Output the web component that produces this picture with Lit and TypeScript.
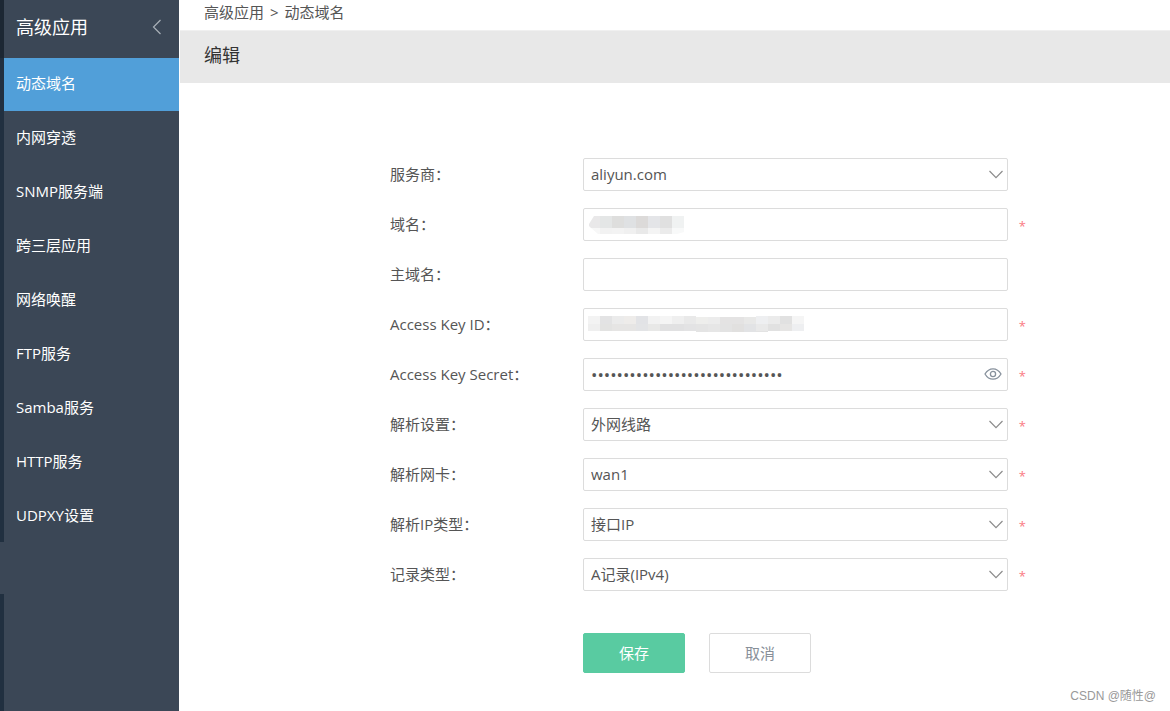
import { LitElement, html, svg, css, nothing } from "lit";
import { customElement, property, state } from "lit/decorators.js";

type Cell = [x: number, y: number, w: number, h: number, fill: string];

interface Field {
  id: string;
  label: string;
  kind: "select" | "text" | "password";
  value?: string;
  options?: string[];
  required?: boolean;
  mask?: "domain" | "key";
}

const MENU = [
  "动态域名",
  "内网穿透",
  "SNMP服务端",
  "跨三层应用",
  "网络唤醒",
  "FTP服务",
  "Samba服务",
  "HTTP服务",
  "UDPXY设置",
];

const FIELDS: Field[] = [
  { id: "provider", label: "服务商", kind: "select", options: ["aliyun.com"] },
  { id: "domain", label: "域名", kind: "text", required: true, mask: "domain" },
  { id: "main-domain", label: "主域名", kind: "text" },
  { id: "key-id", label: "Access Key ID", kind: "text", required: true, mask: "key" },
  {
    id: "key-secret",
    label: "Access Key Secret",
    kind: "password",
    value: "0".repeat(30),
    required: true,
  },
  { id: "line", label: "解析设置", kind: "select", options: ["外网线路"], required: true },
  { id: "nic", label: "解析网卡", kind: "select", options: ["wan1"], required: true },
  { id: "ip-type", label: "解析IP类型", kind: "select", options: ["接口IP"], required: true },
  { id: "record", label: "记录类型", kind: "select", options: ["A记录(IPv4)"], required: true },
];

const row = (fills: string[], x: number, y: number, h: number): Cell[] =>
  fills.map((fill, i) => [x + i * 12, y, 12, h, fill]);

const DOMAIN_CELLS: Cell[] = [
  ...row(["#e4e6e6", "#dededd", "#dfe1e3", "#dcdad9", "#e4e5e8", "#e0e0e0", "#f0f2f2"], 12, 0, 12),
  ...row(["#f2f2f2", "#f3f3f3", "#f0f0f0", "#e9e9e9", "#f4f4f4", "#ebebeb"], 12, 12, 6),
];

const KEY_CELLS: Cell[] = [
  ...row(
    ["#f3f3f3", "#e3e3e4", "#ebebeb", "#eeecea", "#e2e3e6", "#f2f2f2", "#f5f5f5", "#efefef", "#e9e9e9"],
    0, 0, 8,
  ),
  ...row(["#eeeeec", "#ececec", "#e4e3e3", "#e4e3e3", "#e8e8e7", "#efefef"], 108, 1, 7),
  ...row(["#eeeff1", "#ebebeb", "#e1e1e1", "#f5f5f5"], 168, 0, 8),
  ...row(
    ["#efefef", "#e3e3e2", "#e6e5e4", "#e6e5e4", "#e3e4e6", "#e8e8e7", "#e1e1e2", "#e1e1e2", "#e3e3e4"],
    0, 8, 7,
  ),
  ...row(["#e4e4e4", "#e6e6e6", "#e3e3e3", "#e1e0df", "#e2e3e5", "#e3e3e3"], 108, 8, 8),
  ...row(["#e9e9e9", "#e1e1e1", "#e6e5e4", "#eeeff1"], 168, 8, 7),
];

const cells = (list: Cell[]) =>
  list.map(([x, y, w, h, fill]) => svg`<rect x=${x} y=${y} width=${w} height=${h} fill=${fill} />`);

@customElement("side-menu")
class SideMenu extends LitElement {
  @property({ type: Array }) items: string[] = [];
  @state() private active = 0;

  static styles = css`
    :host {
      display: flex;
      flex: none;
      background: #3b4756;
      color: #fff;
    }
    .rail {
      display: flex;
      flex-direction: column;
      width: 4px;
    }
    .rail-top {
      height: 58px;
      background: #1c2733;
    }
    .rail-mid {
      height: 484px;
      background: #213040;
    }
    .rail-current {
      height: 52px;
    }
    .rail-rest {
      flex: 1;
      background: #213040;
    }
    .panel {
      width: 175px;
    }
    .head {
      display: flex;
      align-items: center;
      justify-content: space-between;
      box-sizing: border-box;
      height: 58px;
      padding: 0 17px 4px 12px;
    }
    .title {
      margin: 0;
      font-size: 18px;
      font-weight: 400;
      line-height: 24px;
    }
    .fold {
      display: flex;
      padding: 0;
      border: 0;
      background: none;
      cursor: pointer;
    }
    .list {
      display: grid;
      gap: 1px;
      margin: 0;
      padding: 0;
      list-style: none;
    }
    .item {
      display: block;
      height: 53px;
      padding-left: 12px;
      color: #fff;
      font-size: 15px;
      line-height: 51px;
      text-decoration: none;
    }
    .item.active {
      background: #519fd9;
    }
  `;

  render() {
    return html`
      <div class="rail">
        <div class="rail-top"></div>
        <div class="rail-mid"></div>
        <div class="rail-current"></div>
        <div class="rail-rest"></div>
      </div>
      <nav class="panel">
        <div class="head">
          <h2 class="title">高级应用</h2>
          <button class="fold" type="button" aria-label="收起">
            <svg width="10" height="16" viewBox="0 0 10 16" fill="none" stroke="#a9b0b8" stroke-width="1.2">
              <path d="M8.5 1 L1.5 8 L8.5 15" />
            </svg>
          </button>
        </div>
        <ul class="list">
          ${this.items.map(
            (name, i) => html`<li>
              <a
                class="item ${i === this.active ? "active" : ""}"
                href="#"
                @click=${(e: Event) => {
                  e.preventDefault();
                  this.active = i;
                }}
                >${name}</a
              >
            </li>`,
          )}
        </ul>
      </nav>
    `;
  }
}

@customElement("ddns-form")
class DdnsForm extends LitElement {
  @property({ type: Array }) fields: Field[] = [];
  @state() private reveal = false;

  static styles = css`
    :host {
      display: block;
    }
    .form {
      display: grid;
      gap: 17px;
      padding: 75px 144px 0 211px;
    }
    .row {
      display: grid;
      grid-template-columns: 193px minmax(0, 1fr) 18px;
      align-items: center;
    }
    .label {
      color: #555;
      font-size: 15px;
      line-height: 33px;
    }
    .box {
      display: grid;
      grid-template-columns: minmax(0, 1fr) auto;
      align-items: center;
    }
    .control {
      grid-area: 1 / 1 / 2 / 3;
      box-sizing: border-box;
      width: 100%;
      height: 33px;
      margin: 0;
      padding: 0 32px 2px 7px;
      border: 1px solid #dcdcdc;
      border-radius: 2px;
      outline: 0;
      background: #fff;
      color: #555;
      font-family: inherit;
      font-size: 15px;
      appearance: none;
    }
    .control.secret {
      padding-bottom: 0;
      font-size: 17px;
    }
    .control:focus-visible {
      border-color: #519fd9;
    }
    .icon {
      grid-area: 1 / 2;
      display: flex;
      margin-right: 5px;
      pointer-events: none;
    }
    .eye {
      grid-area: 1 / 2;
      display: flex;
      margin-right: 6px;
      padding: 0 0 2px;
      border: 0;
      background: none;
      cursor: pointer;
    }
    .mask {
      grid-area: 1 / 1;
      justify-self: start;
      margin-left: 5px;
      pointer-events: none;
    }
    .star {
      justify-self: end;
      padding-top: 2px;
      color: #fa7a82;
      font-size: 13px;
      line-height: 18px;
    }
    .actions {
      display: flex;
      gap: 24px;
      padding: 25px 0 0 193px;
    }
    .button {
      box-sizing: border-box;
      width: 102px;
      height: 40px;
      padding: 0 0 2px;
      border: 1px solid #dcdcdc;
      border-radius: 2px;
      background: #fff;
      color: #888f99;
      font-family: inherit;
      font-size: 15px;
      cursor: pointer;
    }
    .button.primary {
      border-color: #59cba1;
      background: #59cba1;
      color: #fff;
    }
  `;

  private mask(kind: Field["mask"]) {
    if (kind === "domain") {
      return html`<svg class="mask" width="96" height="18" viewBox="0 0 96 18" aria-hidden="true">
        <path d="M6 0 H12 V12 H3 L1 10 V8 Z" fill="#e9e8e9" />
        <path d="M3 12 H12 V18 H10 Z" fill="#f7f7f7" />
        ${cells(DOMAIN_CELLS)}
        <path d="M84 12 H96 V16 L89 18 H84 Z" fill="#f8f9f9" />
      </svg>`;
    }
    return html`<svg class="mask" width="216" height="17" viewBox="0 0 216 17" aria-hidden="true">
      ${cells(KEY_CELLS)}
    </svg>`;
  }

  private control(f: Field) {
    if (f.kind === "select") {
      return html`<select class="control" id=${f.id}>
          ${f.options?.map((o) => html`<option>${o}</option>`)}
        </select>
        <span class="icon">
          <svg width="14" height="9" viewBox="0 0 14 9" fill="none" stroke="#8c8c8c" stroke-width="1.2">
            <path d="M0.5 1 L7 7.7 L13.5 1" />
          </svg>
        </span>`;
    }
    if (f.kind === "password") {
      return html`<input
          class="control ${this.reveal ? "" : "secret"}"
          id=${f.id}
          type=${this.reveal ? "text" : "password"}
          autocomplete="off"
          .value=${f.value ?? ""}
        />
        <button
          class="eye"
          type="button"
          aria-label="显示密码"
          @click=${() => (this.reveal = !this.reveal)}
        >
          <svg width="18" height="12" viewBox="0 0 18 12" fill="none" stroke="#87919c" stroke-width="1.3">
            <path d="M1 6 C3 2.6 5.8 0.8 9 0.8 S15 2.6 17 6 C15 9.4 12.2 11.2 9 11.2 S3 9.4 1 6 Z" />
            <circle cx="9" cy="6" r="2.6" />
          </svg>
        </button>`;
    }
    return html`<input class="control" id=${f.id} type="text" autocomplete="off" />
      ${f.mask ? this.mask(f.mask) : nothing}`;
  }

  render() {
    return html`
      <form class="form" @submit=${(e: Event) => e.preventDefault()}>
        ${this.fields.map(
          (f) => html`<div class="row">
            <label class="label" for=${f.id}>${f.label}${"\uFF1A"}</label>
            <div class="box">${this.control(f)}</div>
            ${f.required ? html`<span class="star">*</span>` : nothing}
          </div>`,
        )}
        <div class="actions">
          <button class="button primary" type="submit">保存</button>
          <button class="button" type="button">取消</button>
        </div>
      </form>
    `;
  }
}

@customElement("app-root")
class AppRoot extends LitElement {
  static styles = css`
    :host {
      position: relative;
      display: flex;
      min-height: 100vh;
      background: #fff;
      font-family: "Open Sans", "Noto Sans CJK SC", sans-serif;
    }
    .main {
      flex: 1;
      min-width: 0;
      padding-left: 1px;
    }
    .crumbs {
      display: flex;
      gap: 6px;
      box-sizing: border-box;
      height: 30px;
      padding-left: 24px;
      color: #555;
      font-size: 15px;
      line-height: 24px;
    }
    .crumb {
      color: inherit;
      text-decoration: none;
    }
    .heading {
      box-sizing: border-box;
      height: 53px;
      margin: 0;
      padding-left: 24px;
      border-top: 1px solid #f0f0f0;
      background: #e8e8e8;
      color: #333;
      font-size: 18px;
      font-weight: 400;
      line-height: 48px;
    }
    .form-area {
      margin-left: -1px;
    }
    .credit {
      position: absolute;
      right: 14px;
      bottom: 6px;
      color: #999;
      font-family: "Liberation Sans", "Noto Sans CJK SC", sans-serif;
      font-size: 12px;
      line-height: 18px;
    }
  `;

  render() {
    return html`
      <side-menu .items=${MENU}></side-menu>
      <main class="main">
        <div class="crumbs">
          <a class="crumb" href="#">高级应用</a><span>&gt;</span><span>动态域名</span>
        </div>
        <h1 class="heading">编辑</h1>
        <ddns-form class="form-area" .fields=${FIELDS}></ddns-form>
      </main>
      <span class="credit">CSDN @随性@</span>
    `;
  }
}
